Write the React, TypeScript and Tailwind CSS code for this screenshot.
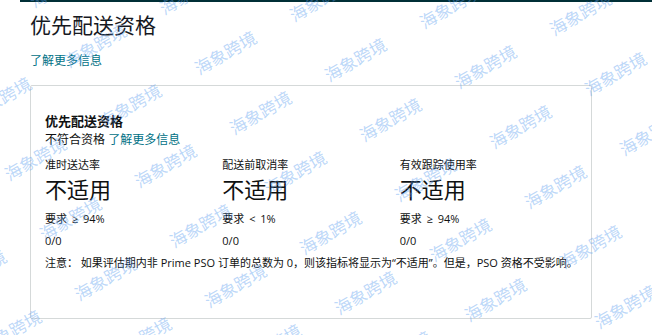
import React from "react";

const Watermarks = () => {
  const items: React.ReactNode[] = [];
  for (let j = -2; j <= 6; j++) {
    for (let i = -3; i <= 6; i++) {
      const cx = 95 + 130 * i + 35 * j;
      const cy = 45 + 7 * i + 60 * j;
      if (cx < -60 || cx > 712 || cy < -40 || cy > 375) continue;
      items.push(
        <span
          key={`${i}_${j}`}
          className="absolute whitespace-nowrap text-[17px] leading-none text-[rgba(96,160,240,0.42)] font-['Noto_Sans_CJK_SC',sans-serif]"
          style={{ left: cx, top: cy, transform: "translate(-50%,-50%) rotate(-30deg)" }}
        >
          海象跨境
        </span>
      );
    }
  }
  return <div className="pointer-events-none absolute inset-0 overflow-hidden">{items}</div>;
};

const cols = [
  { label: "准时送达率", req: "要求 ≥ 94%" },
  { label: "配送前取消率", req: "要求 < 1%" },
  { label: "有效跟踪使用率", req: "要求 ≥ 94%" },
];

export default function App() {
  return (
    <div className="relative h-[335px] w-[652px] overflow-hidden bg-white font-['Open_Sans','Noto_Sans_CJK_SC',sans-serif] text-[#0f1111]">
      <div className="ml-[20px] h-[2px] bg-[#002f36]" />
      <div className="px-[30px]">
        <h1 className="mt-[10px] text-[21px] font-normal leading-[26px] text-[#16191f]">优先配送资格</h1>
        <a className="mt-[15px] block text-[12px] leading-[16px] text-[#007185]">了解更多信息</a>
        <div className="mt-[16px] w-[562px] rounded-[2px] border border-[#d5d9d9] px-[14px] pt-[25px] pb-[48px]">
          <div className="text-[13px] font-bold leading-[21px]">优先配送资格</div>
          <div className="text-[12px] leading-[16px]">
            不符合资格 <a className="text-[#007185]">了解更多信息</a>
          </div>
          <div className="mt-[10px] grid grid-cols-3">
            {cols.map((c) => (
              <div key={c.label}>
                <div className="text-[11px] leading-[14px]">{c.label}</div>
                <div className="mt-[4px] text-[22px] leading-[26px]">不适用</div>
                <div className="mt-[10px] text-[11px] leading-[14px] [word-spacing:2px]">{c.req}</div>
                <div className="mt-[8px] text-[11px] leading-[14px]">0/0</div>
              </div>
            ))}
          </div>
          <div className="mt-[8px] whitespace-nowrap text-[11px] leading-[14px]">
            注意： 如果评估期内非 Prime PSO 订单的总数为 0，则该指标将显示为“不适用”。但是，PSO 资格不受影响。
          </div>
        </div>
      </div>
      <Watermarks />
    </div>
  );
}
